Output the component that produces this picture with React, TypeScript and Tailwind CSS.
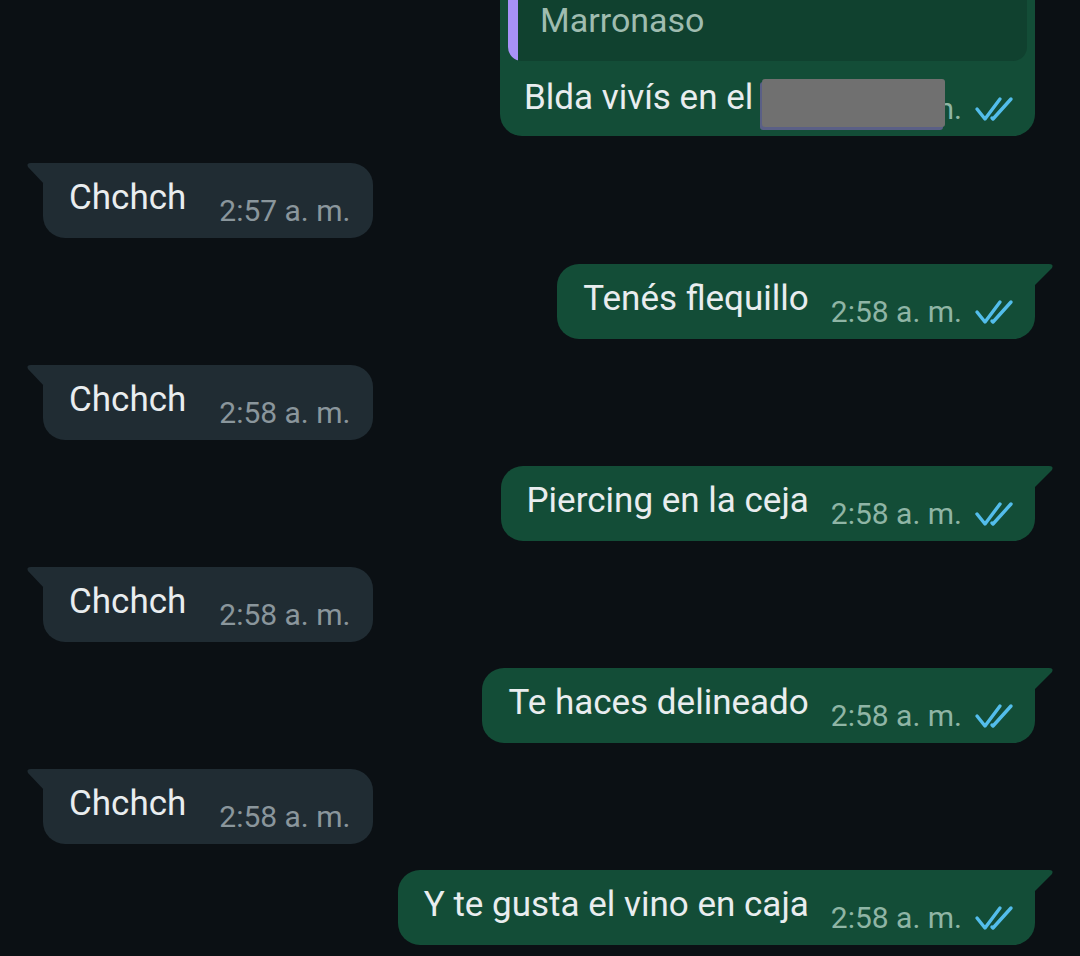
import { type ReactNode } from 'react';

type Msg = { id: number; from: 'me' | 'them'; text: string; time: string };

const messages: Msg[] = [
    { id: 1, from: 'them', text: 'Chchch', time: '2:57 a. m.' },
    { id: 2, from: 'me', text: 'Tenés flequillo', time: '2:58 a. m.' },
    { id: 3, from: 'them', text: 'Chchch', time: '2:58 a. m.' },
    { id: 4, from: 'me', text: 'Piercing en la ceja', time: '2:58 a. m.' },
    { id: 5, from: 'them', text: 'Chchch', time: '2:58 a. m.' },
    { id: 6, from: 'me', text: 'Te haces delineado', time: '2:58 a. m.' },
    { id: 7, from: 'them', text: 'Chchch', time: '2:58 a. m.' },
    { id: 8, from: 'me', text: 'Y te gusta el vino en caja', time: '2:58 a. m.' },
];

/** Double blue tick (read receipt). */
function ReadTicks() {
    return (
        <svg width="40" height="26" viewBox="0 0 40 26" className="ml-[12px] shrink-0">
            <path d="M3 13 L11 23 L26 3" fill="none" stroke="#53bdeb" strokeWidth="3.4" strokeLinecap="round" strokeLinejoin="round" />
            <path d="M18 22 L19 23 L37 3" fill="none" stroke="#53bdeb" strokeWidth="3.4" strokeLinecap="round" strokeLinejoin="round" />
        </svg>
    );
}

function TailRight({ color }: { color: string }) {
    return (
        <svg width="22" height="24" viewBox="0 0 22 24" className="absolute -right-[20px] top-0">
            <path d="M0 0 H16 Q21 0 19 4 L0 23 Z" fill={color} />
        </svg>
    );
}

function TailLeft({ color }: { color: string }) {
    return (
        <svg width="22" height="24" viewBox="0 0 22 24" className="absolute -left-[18px] top-0">
            <path d="M22 0 H6 Q1 0 3 4 L20 22 H22 Z" fill={color} />
        </svg>
    );
}

function Bubble({ msg }: { msg: Msg }) {
    const mine = msg.from === 'me';
    return (
        <div className={mine ? 'flex justify-end pr-[45px]' : 'flex justify-start pl-[43px]'}>
            <div
                className={
                    mine
                        ? 'relative flex items-start rounded-[22px] rounded-tr-none bg-[#134d37] pt-[14px] pb-[11px] pl-[26px] pr-[21px]'
                        : 'relative flex items-start rounded-[22px] rounded-tl-none bg-[#202c33] pt-[14px] pb-[11px] pl-[26px] pr-[23px]'
                }
            >
                {mine ? <TailRight color="#134d37" /> : <TailLeft color="#202c33" />}
                <span className="text-[35px] leading-[42px] text-[#e9edef]">{msg.text}</span>
                <span
                    className={
                        mine
                            ? 'ml-[22px] mt-[18px] flex items-center text-[30px] leading-[32px] text-[#8fb5a5]'
                            : 'ml-[33px] mt-[18px] flex items-center text-[30px] leading-[32px] text-[#8a969c]'
                    }
                >
                    {msg.time}
                    {mine && <ReadTicks />}
                </span>
            </div>
        </div>
    );
}

function Row({ children }: { children: ReactNode }) {
    return <div className="mb-[26px]">{children}</div>;
}

export default function App() {
    return (
        <div className="h-[956px] w-[1080px] overflow-hidden bg-[#0b1014] font-['Roboto',sans-serif]">
            {/* ── Reply bubble, cut off at the top ─────────────────────── */}
            <div className="mb-[27px] flex justify-end pr-[45px]">
                <div className="relative -mt-[48px] w-[535px] rounded-[22px] bg-[#134d37] px-[8px] pt-[8px] pb-[11px]">
                    <div className="flex overflow-hidden rounded-[14px] bg-[#10412f]">
                        <div className="w-[10px] shrink-0 bg-[#a791f7]" />
                        <div className="flex flex-col pl-[22px] pb-[21px]">
                            <span className="text-[30px] leading-[40px] text-[#e9edef] opacity-0">Tú</span>
                            <span className="text-[34px] leading-[40px] text-[#9fbcb0]">Marronaso</span>
                        </div>
                    </div>
                    <div className="flex items-start pl-[16px] pr-[13px] pt-[16px]">
                        <span className="text-[35px] leading-[42px] text-[#e9edef]">Blda vivís en el</span>
                        <span className="ml-auto mt-[16px] flex items-center text-[30px] leading-[32px] text-[#8fb5a5]">
                            2:58 a. m.
                            <ReadTicks />
                        </span>
                    </div>
                    <div className="absolute bottom-[9px] left-[262px] h-[48px] w-[183px] rounded-[3px] bg-[#707070] shadow-[-2px_3px_0_#5a5f86]" />
                </div>
            </div>

            <div className="flex flex-col">
                {messages.map((m) => (
                    <Row key={m.id}>
                        <Bubble msg={m} />
                    </Row>
                ))}
            </div>
        </div>
    );
}
